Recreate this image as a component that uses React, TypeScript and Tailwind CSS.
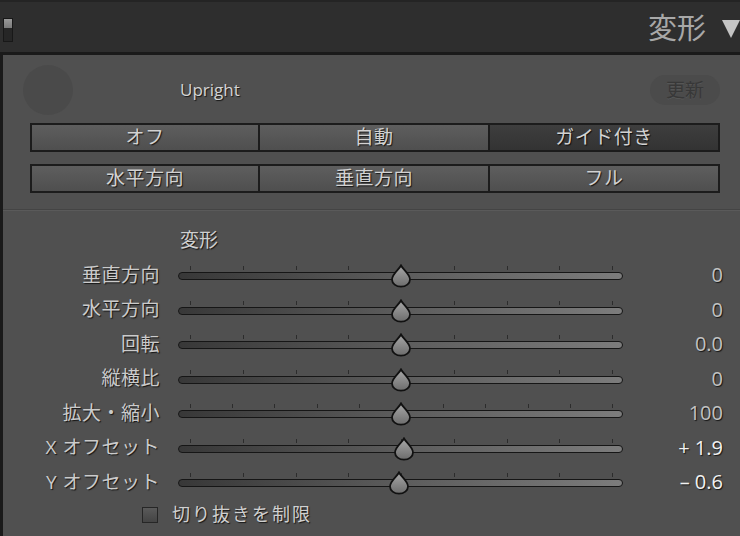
import React from 'react';

const FONT = { fontFamily: '"Open Sans", "Noto Sans CJK JP", sans-serif' };

type Slider = {
  label: string;
  value: string;
  pos: number;
  ticks: number;
  bright?: boolean;
};

const SLIDERS: Slider[] = [
  { label: '垂直方向', value: '0', pos: 0.5, ticks: 9 },
  { label: '水平方向', value: '0', pos: 0.5, ticks: 9 },
  { label: '回転', value: '0.0', pos: 0.5, ticks: 9 },
  { label: '縦横比', value: '0', pos: 0.5, ticks: 9 },
  { label: '拡大・縮小', value: '100', pos: 0.5, ticks: 11 },
  { label: 'X オフセット', value: '+ 1.9', pos: 0.507, ticks: 9, bright: true },
  { label: 'Y オフセット', value: '– 0.6', pos: 0.496, ticks: 9, bright: true },
];

const shadow = '[text-shadow:1px_1px_1px_rgba(0,0,0,0.75)]';

function Thumb() {
  return (
    <svg width="22" height="24" viewBox="0 0 22 24" className="block">
      <defs>
        <linearGradient id="thumbfill" x1="0" y1="0" x2="0" y2="1">
          <stop offset="0" stopColor="#a8a8a8" />
          <stop offset="1" stopColor="#6c6c6c" />
        </linearGradient>
      </defs>
      <path
        d="M11 1.5 C13 5.5 20 10 20 15.5 A9 7.2 0 0 1 2 15.5 C2 10 9 5.5 11 1.5 Z"
        fill="url(#thumbfill)"
        stroke="#111"
        strokeWidth="1.8"
      />
    </svg>
  );
}

function SliderRow({ s }: { s: Slider }) {
  const ticks = Array.from({ length: s.ticks }, (_, i) => i / (s.ticks - 1));
  return (
    <div className="flex items-center h-[34.5px]">
      <div className={`w-[157px] text-right text-[19px] tracking-[0.5px] text-[#cbcbcb] leading-none ${shadow}`}>
        {s.label}
      </div>
      <div className="relative ml-[18px] w-[445px] h-[24px]">
        {ticks.map((t, i) => (
          <div
            key={i}
            className="absolute top-[3px] w-[1px] h-[4px] bg-[#2c2c2c]"
            style={{ left: `${12 + t * 422}px` }}
          />
        ))}
        <div className="absolute left-0 right-0 top-[9px] h-[8px] rounded-full border border-[#161616] bg-gradient-to-r from-[#383838] via-[#5c5c5c] to-[#7c7c7c]" />
        <div className="absolute top-[1px]" style={{ left: `${s.pos * 445 - 11}px` }}>
          <Thumb />
        </div>
      </div>
      <div
        className={`w-[100px] text-right text-[20px] leading-none ${shadow} ${
          s.bright ? 'text-[#f2f2f2]' : 'text-[#c2c2c2]'
        }`}
      >
        {s.value}
      </div>
    </div>
  );
}

function SegButtons({ items, active }: { items: [string, number][]; active?: number }) {
  return (
    <div className="ml-[27px] w-[690px] h-[29px] flex border-2 border-[#1c1c1c]">
      {items.map(([label, w], i) => (
        <div
          key={label}
          className={`flex items-center justify-center text-[19px] tracking-[0.5px] text-[#d2d2d2] ${shadow} ${
            i > 0 ? 'border-l-2 border-[#1c1c1c]' : ''
          } ${
            active === i
              ? 'bg-gradient-to-b from-[#3e3e3e] to-[#333333]'
              : 'bg-gradient-to-b from-[#5e5e5e] to-[#4f4f4f]'
          }`}
          style={{ width: `${w}px` }}
        >
          {label}
        </div>
      ))}
    </div>
  );
}

export default function App() {
  return (
    <div className="w-[740px] h-[536px] overflow-hidden bg-[#505050] flex flex-col" style={FONT}>
      {/* header */}
      <div className="h-[52px] bg-[#2e2e2e] border-t-[2px] border-[#242424] flex items-center shrink-0">
        <div className="ml-[3px] mt-[6px] w-[10px] h-[24px] border border-[#181818] flex flex-col">
          <div className="h-[9px] bg-gradient-to-b from-[#9a9a9a] to-[#7a7a7a]" />
          <div className="flex-1 bg-[#262626]" />
        </div>
        <div className="ml-auto text-[29px] text-[#a8a8a8] leading-none">変形</div>
        <svg width="18" height="20" viewBox="0 0 18 20" className="ml-[16px] mt-[3px]">
          <polygon points="0,1 18,1 9,19" fill="#c4c4c4" />
        </svg>
      </div>
      <div className="h-[3px] bg-[#1a1a1a] shrink-0" />

      {/* panel */}
      <div className="flex-1 border-l-[3px] border-[#1a1a1a] flex flex-col pt-[10px]">
        <div className="flex items-center h-[50px]">
          <div className="ml-[20px] w-[50px] h-[50px] rounded-full bg-[#4a4a4a]" />
          <div className={`ml-[107px] text-[17px] text-[#d4d4d4] ${shadow}`}>Upright</div>
          <div className="ml-auto mr-[20px] w-[70px] h-[30px] rounded-full bg-[#4b4b4b] flex items-center justify-center text-[19px] text-[#383838] [text-shadow:0_1px_0_rgba(255,255,255,0.08)]">
            更新
          </div>
        </div>

        <div className="mt-[8px]">
          <SegButtons
            items={[
              ['オフ', 226],
              ['自動', 230],
              ['ガイド付き', 230],
            ]}
            active={2}
          />
        </div>
        <div className="mt-[12px]">
          <SegButtons
            items={[
              ['水平方向', 226],
              ['垂直方向', 230],
              ['フル', 230],
            ]}
          />
        </div>

        <div className="mt-[16px] h-[2px] border-t border-[#444444] border-b border-b-[#5a5a5a]" />

        <div className={`mt-[17px] pl-[177px] h-[24px] text-[19px] text-[#d0d0d0] leading-[24px] ${shadow}`}>
          変形
        </div>

        <div className="mt-[6px] flex flex-col">
          {SLIDERS.map((s) => (
            <SliderRow key={s.label} s={s} />
          ))}
        </div>

        <div className="h-[30px] flex items-center">
          <div className="ml-[139px] w-[16px] h-[16px] border border-[#262626] bg-gradient-to-b from-[#5a5a5a] to-[#444444]" />
          <div className={`ml-[14px] text-[18px] tracking-[2px] text-[#d0d0d0] ${shadow}`}>切り抜きを制限</div>
        </div>
      </div>
    </div>
  );
}
